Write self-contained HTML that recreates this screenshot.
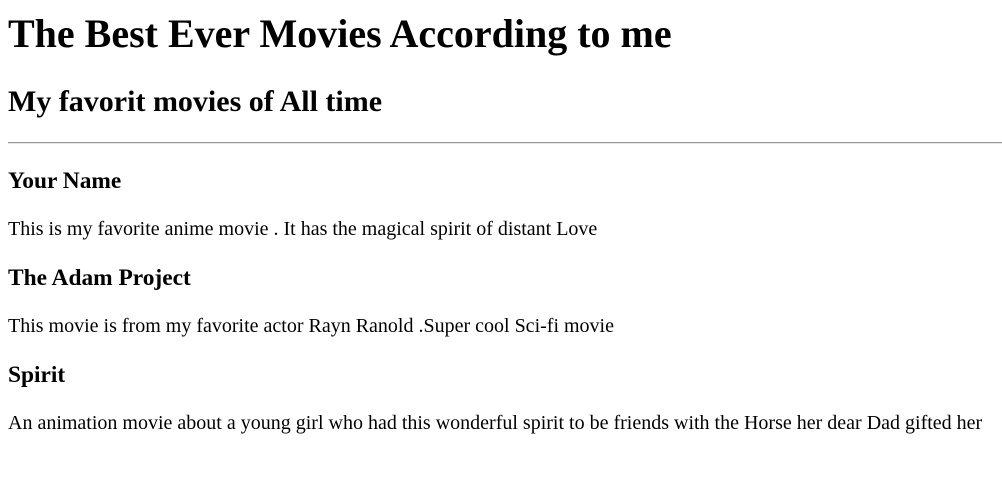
<!DOCTYPE html>
<html><head><style>
body{margin:0;width:1002px;height:480px;background:#fff;font-family:"Liberation Serif",serif;color:#000;position:relative;overflow:hidden}
.t{position:absolute;left:8px;line-height:1;white-space:nowrap;margin:0}
.h1{font-size:40px;font-weight:bold}
.h2{font-size:30px;font-weight:bold}
.h3{font-size:23.4px;font-weight:bold}
.p{font-size:20px}
.hr{position:absolute;left:8px;width:994px;top:142px;height:1px;background:#999;border-bottom:1px solid #e6e6e6}
</style></head><body>
<div class="t h1" style="top:14px">The Best Ever Movies According to me</div>
<div class="t h2" style="top:87px">My favorit movies of All time</div>
<div class="hr"></div>
<div class="t h3" style="top:170px">Your Name</div>
<div class="t p" style="top:219px">This is my favorite anime movie . It has the magical spirit of distant Love</div>
<div class="t h3" style="top:267px">The Adam Project</div>
<div class="t p" style="top:316px">This movie is from my favorite actor Rayn Ranold .Super cool Sci-fi movie</div>
<div class="t h3" style="top:364px">Spirit</div>
<div class="t p" style="top:413px">An animation movie about a young girl who had this wonderful spirit to be friends with the Horse her dear Dad gifted her</div>
</body></html>
